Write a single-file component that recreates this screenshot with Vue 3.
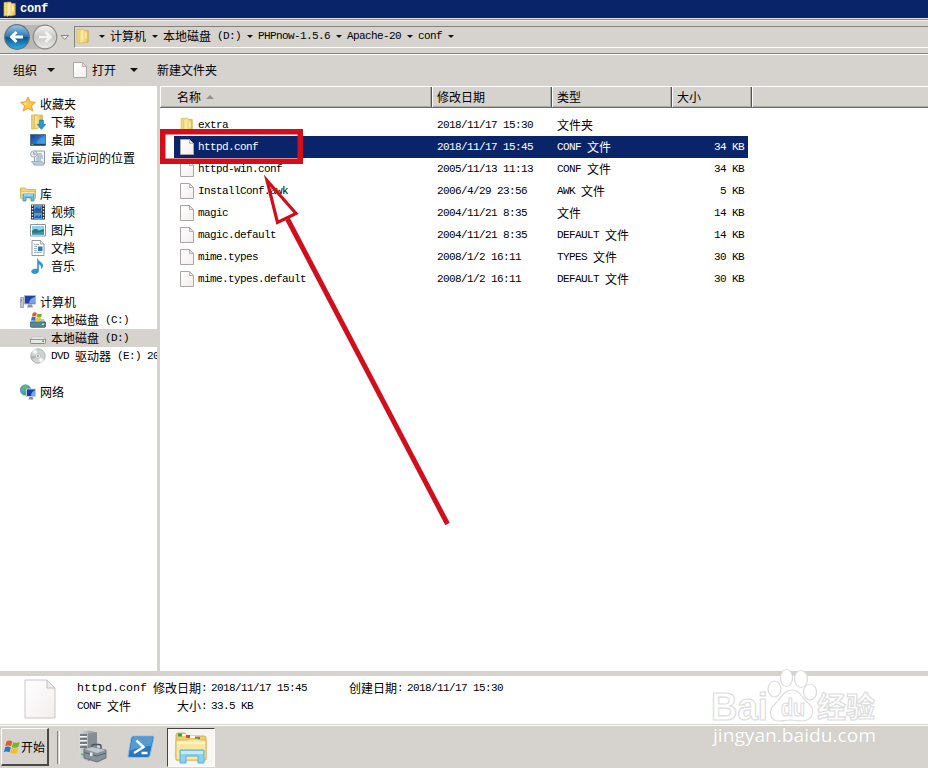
<script setup>
import { h } from 'vue'

// Sets Latin runs in a half-width face beside full-width Chinese glyphs.
const Txt = (props) =>
  h('span', { class: 'txt' }, props.t.split(/([\x00-\x7f]+)/).filter(Boolean).map((s) =>
    h('span', { class: /^[\x00-\x7f]/.test(s) ? 'latin' : 'han' }, s)))
Txt.props = ['t']

const crumbs = ['计算机', '本地磁盘 (D:)', 'PHPnow-1.5.6', 'Apache-20', 'conf']

const groups = [
  { name: '收藏夹', icon: 'star', items: [['下载', 'download'], ['桌面', 'desktop'], ['最近访问的位置', 'recent']] },
  { name: '库', icon: 'library', items: [['视频', 'video'], ['图片', 'picture'], ['文档', 'document'], ['音乐', 'music']] },
  { name: '计算机', icon: 'computer', items: [['本地磁盘 (C:)', 'sysdisk'], ['本地磁盘 (D:)', 'disk'], ['DVD 驱动器 (E:) 20', 'dvd']] },
  { name: '网络', icon: 'network', items: [] },
]

const files = [
  ['extra', '2018/11/17 15:30', '文件夹', ''],
  ['httpd.conf', '2018/11/17 15:45', 'CONF 文件', '34 KB'],
  ['httpd-win.conf', '2005/11/13 11:13', 'CONF 文件', '34 KB'],
  ['InstallConf.awk', '2006/4/29 23:56', 'AWK 文件', '5 KB'],
  ['magic', '2004/11/21 8:35', '文件', '14 KB'],
  ['magic.default', '2004/11/21 8:35', 'DEFAULT 文件', '14 KB'],
  ['mime.types', '2008/1/2 16:11', 'TYPES 文件', '30 KB'],
  ['mime.types.default', '2008/1/2 16:11', 'DEFAULT 文件', '30 KB'],
]
</script>

<template>
  <div class="window">
    <svg class="defs" width="0" height="0">
      <defs>
        <linearGradient id="gold" x1="0" x2="1"><stop offset="0" stop-color="#fff3b0" /><stop offset="1" stop-color="#e0b63c" /></linearGradient>
        <linearGradient id="sky" x1="0" y1="0" x2="1" y2="1"><stop offset="0" stop-color="#0b3f9c" /><stop offset="1" stop-color="#4ba3ec" /></linearGradient>
        <linearGradient id="paper" x1="0" y1="0" x2="1" y2="1"><stop offset="0" stop-color="#fff" /><stop offset="1" stop-color="#f3eeee" /></linearGradient>
        <linearGradient id="back" x1="0" y1="0" x2="0" y2="1"><stop offset="0" stop-color="#9cc7e4" /><stop offset=".48" stop-color="#2a78b4" /><stop offset=".5" stop-color="#0a4f8e" /><stop offset="1" stop-color="#2cb4e8" /></linearGradient>
        <linearGradient id="fwd" x1="0" y1="0" x2="0" y2="1"><stop offset="0" stop-color="#f4f4f2" /><stop offset=".5" stop-color="#c9c8c5" /><stop offset="1" stop-color="#ecebe8" /></linearGradient>
        <linearGradient id="metal" x1="0" x2="1"><stop offset="0" stop-color="#d4d8dc" /><stop offset="1" stop-color="#8a9299" /></linearGradient>
        <symbol id="folder" viewBox="0 0 16 16">
          <path d="M2 1.5 8 1v13l-6 1z" fill="#f0d67c" stroke="#d9b84e" stroke-width=".6" />
          <path d="M8 2.5h5.3V14L8 15z" fill="url(#gold)" stroke="#cfa63a" stroke-width=".6" />
          <path d="M5 2.5 9 1v12.5L5 15.5z" fill="#fbeaa4" stroke="#dfbf5c" stroke-width=".6" />
          <path d="M11 4.5v6" stroke="#fff8d4" stroke-width="1.2" />
        </symbol>
        <symbol id="page" viewBox="0 0 14 16">
          <path d="M.5.5h9l4 4v11H.5z" fill="url(#paper)" stroke="#aaa6a6" />
          <path d="M9.5.5v4h4z" fill="#e3e0e0" stroke="#aaa6a6" stroke-width=".8" />
        </symbol>
        <symbol id="flag" viewBox="0 0 16 16">
          <path d="M2.4 2.6C4.5 1.4 6 1.7 7.8 2.8L6.6 7.4C4.8 6.4 3.2 6.3 1.2 7.3z" fill="#e65a24" />
          <path d="M8.6 3.2c2 1 3.8 1.2 6.2.1l-1.3 4.8c-2.1 1-4.1.9-6.1-.2z" fill="#76b52b" />
          <path d="M1 8.2c2-1 3.6-.8 5.4.2L5.2 13C3.4 12 1.9 11.9 0 12.8z" fill="#2c78cc" />
          <path d="M7.2 8.8c2 1 3.9 1.2 6.1.2l-1.3 4.7c-2.1 1-4 .8-6-.2z" fill="#f6bd20" />
        </symbol>
        <symbol id="star" viewBox="0 0 16 16"><path d="m8 1 2.2 4.8 5.2.5-3.9 3.5 1.2 5.1L8 12.2l-4.7 2.7 1.2-5.1L.6 6.3l5.2-.5z" fill="#ffc843" stroke="#dc962a" stroke-width=".9" /><path d="m8 3-1.5 3.6-3.5.5 3 2.3z" fill="#ffe69c" /></symbol>
        <symbol id="download" viewBox="0 0 16 16"><path d="M1.5 1 7 .6v13.8l-5.5.9z" fill="#ecd070" stroke="#ceb058" stroke-width=".6" /><path d="M4.5 2 8 1h4.5v12L5 15z" fill="url(#gold)" stroke="#d0af4c" stroke-width=".6" /><path d="M9.5 6h4v4.3H16L11.5 15.5 7.2 10.3h2.3z" fill="#2994da" stroke="#1a6eb2" stroke-width=".5" /></symbol>
        <symbol id="desktop" viewBox="0 0 16 16"><path d="M.5 2.5h15v11H.5z" fill="url(#sky)" stroke="#587292" /><path d="M6 13c1-5 4-8 9-9v9z" fill="#5ab1ef" opacity=".45" /><path d="M1 11.8h14v1.4H1z" fill="#203f69" /><path d="M1.4 11.8h2v1.3h-2z" fill="#66b33b" /></symbol>
        <symbol id="recent" viewBox="0 0 16 16"><path d="M4.5 1h10v12.5h-10z" fill="#f6f9fc" stroke="#8b9aaa" /><path d="M7 4h5M7 6h6M6 8h7M6 10h5" stroke="#648caf" stroke-width=".9" /><path d="M1.5 11.5h10l3 1.7-1 2H4z" fill="#b9c9d8" stroke="#8293a3" stroke-width=".6" /><circle cx="3.8" cy="4" r="3.2" fill="#e8edf2" stroke="#8b98a4" stroke-width=".8" /><path d="M3.8 2v2.2h1.8" fill="none" stroke="#456e96" stroke-width=".7" /></symbol>
        <symbol id="library" viewBox="0 0 16 16"><path d="M.5 2h5l1.2 1.5h8.8V12H.5z" fill="#f0d475" stroke="#c5a548" stroke-width=".7" /><path d="M1 5.5h14V13H1z" fill="#fae9a6" stroke="#cfaf50" stroke-width=".5" /><path d="M3 8h11v7h-3v-3.5H6V15H3z" fill="#69bce9" stroke="#3388bd" stroke-width=".7" /><path d="M4 9h9" stroke="#cceeff" /></symbol>
        <symbol id="video" viewBox="0 0 16 16"><path d="M1 .5h14v15H1z" fill="#283038" /><path d="M4 1h8v6.5H4zM4 8.5h8V15H4z" fill="#4f9cd8" /><path d="m5 5 2-2 2 2 2-2v4H4zM5 13l2-2 2 2 2-3v4H4z" fill="#1b5f9e" /><path d="M2.5 1v14M13.5 1v14" stroke="#f0f4f6" stroke-width="1.4" stroke-dasharray="1.5 1.5" /></symbol>
        <symbol id="picture" viewBox="0 0 16 16"><path d="M.5 2.5h15V14H.5z" fill="#fff" stroke="#909497" /><path d="M2 4h12v8.5H2z" fill="#8bd0ef" /><path d="M2 9c3-3 5-2 7-.5L14 7v5.5H2z" fill="#2c7b79" /><path d="M2 10.5c4 1 7-.2 12-1v3H2z" fill="#2b9db8" /></symbol>
        <symbol id="document" viewBox="0 0 16 16"><path d="M2 .5h8.500L14 4v11.500H2z" fill="#fff" stroke="#8c98a3" /><path d="M10.5.5V4H14" fill="#dfe6eb" stroke="#8c98a3" stroke-width=".8" /><path d="M4 4.5h5M4 6.5h3M4 8.5h3M4 10.5h3M4 12.5h8" stroke="#859cb4" stroke-width=".8" /><path d="M8 6.5h4.500V11H8z" fill="#2f78b8" /></symbol>
        <symbol id="music" viewBox="0 0 16 16"><path d="M7.5.5c1 3.5 5.7 3.8 5.3 7.5-.1 1.2-.7 2-1.500 2.700.7-3-1-4-2.700-4.700V13c-.3 2.100-2.700 3-5 2.500-2.200-.6-2.800-2.500-1-3.700 1.400-1 3.300-1.100 4.900-.6z" fill="#2997dd" stroke="#186da9" stroke-width=".4" /></symbol>
        <symbol id="computer" viewBox="0 0 16 16"><path d="M.6 3.5h3v10h-3z" fill="#c4cbd4" stroke="#7b8794" stroke-width=".7" /><path d="M4.5 1.5h11V10h-11z" fill="#233fa8" stroke="#aeb7c9" /><path d="M9 9.5c.5-4 2.500-6 6-6.500v6.500z" fill="#79a0ed" /><path d="M8 10.5h4l1 3H7z" fill="#8a96a8" /><path d="M1.5 5.5v2" stroke="#55af45" /></symbol>
        <symbol id="disk" viewBox="0 0 16 16"><path d="M2.5 7h11l2 2.500H.5z" fill="#f5f6f5" stroke="#a5a8a8" stroke-width=".5" /><path d="M.5 9.3h15v3.400q0 .8-1 .8h-13q-1 0-1-.8z" fill="#e6e8e8" stroke="#707576" stroke-width=".8" /><path d="M12 10.5h2V12h-2z" fill="#49ad3c" /></symbol>
        <symbol id="sysdisk" viewBox="0 0 16 16"><path d="M2.5 7h11l2 3H.5z" fill="#a7c7cf" /><path d="M.5 10h15v4.500q0 .8-1 .8h-13q-1 0-1-.8z" fill="#558796" stroke="#35616e" stroke-width=".8" /><path d="M12 11.5h2V13h-2z" fill="#bbed80" /><use href="#flag" x="1" y="-1" width="12" height="12" /></symbol>
        <symbol id="dvd" viewBox="0 0 16 16"><circle cx="8" cy="8" r="7.2" fill="#d1d4d3" stroke="#969b9b" stroke-width=".7" /><path d="M8 8 2 4a7 7 0 0 1 4-3zM8 8l6 4a7 7 0 0 1-4 3z" fill="#fff" opacity=".8" /><path d="M8 8 1.5 12a7 7 0 0 1-.5-4z" fill="#a4aba8" opacity=".7" /><circle cx="8" cy="8" r="2.5" fill="#f2f3f3" stroke="#a2a7a6" stroke-width=".6" /><circle cx="8" cy="8" r=".9" fill="#888" /></symbol>
        <symbol id="network" viewBox="0 0 16 16"><circle cx="5.5" cy="6" r="5.2" fill="#49a4df" stroke="#2275b1" stroke-width=".6" /><path d="M2 3c2-2 4-2.500 6-1.500L6 5 3 6z" fill="#6abb50" /><path d="M2 8l3 0 1 2-1 1z" fill="#54ad43" /><path d="M6.5 5h9v7.5h-9z" fill="#1740ad" stroke="#c9d3dd" stroke-width=".9" /><path d="M11 12c.2-3.500 1.700-5 4-5.500V12z" fill="#73a5ef" /><path d="M9.5 13h3l1 2.500h-5z" fill="#7e8b9a" /></symbol>
      </defs>
    </svg>

    <header class="titlebar">
      <svg width="16" height="16"><use href="#folder" /></svg>
      <b>conf</b>
    </header>

    <nav class="navbar">
      <svg class="arrows" width="72" height="30" viewBox="0 0 72 30">
        <path d="M17 3h28q-8 12 0 24H17z" fill="#b9b8b4" />
        <circle cx="17" cy="15" r="12.3" fill="url(#back)" stroke="#66727b" stroke-width="1.2" />
        <path d="M23 15H12M16.5 10 11.5 15l5 5" fill="none" stroke="#fff" stroke-width="2.8" />
        <circle cx="45" cy="15" r="11.8" fill="url(#fwd)" stroke="#8a8986" stroke-width="1.2" />
        <path d="M39 15h11M45.5 10l5 5-5 5" fill="none" stroke="#f4f4f2" stroke-width="2.6" />
        <path d="M61 13.5h7.5L64.8 17.5z" fill="#eee" stroke="#898885" />
      </svg>
      <div class="address">
        <svg width="16" height="16"><use href="#folder" /></svg>
        <i class="caret first"></i>
        <template v-for="c in crumbs" :key="c">
          <Txt :t="c" /><i class="caret"></i>
        </template>
      </div>
    </nav>

    <div class="toolbar">
      <Txt t="组织" /><i class="caret big"></i>
      <svg class="page" width="14" height="16"><use href="#page" /></svg>
      <Txt t="打开" /><i class="caret big open"></i>
      <Txt t="新建文件夹" />
    </div>

    <main class="body">
      <aside class="tree">
        <section v-for="g in groups" :key="g.name">
          <div class="node root"><svg width="16" height="16"><use :href="'#' + g.icon" /></svg><Txt :t="g.name" /></div>
          <div v-for="[n, icon] in g.items" :key="n" class="node" :class="{ current: icon === 'disk' }">
            <svg width="16" height="16"><use :href="'#' + icon" /></svg><Txt :t="n" />
          </div>
        </section>
      </aside>
      <section class="list">
        <div class="head">
          <div class="th name"><Txt t="名称" /><i class="sort"></i></div>
          <div class="th"><Txt t="修改日期" /></div>
          <div class="th"><Txt t="类型" /></div>
          <div class="th size"><Txt t="大小" /></div>
          <div class="th rest"></div>
        </div>
        <div class="rows">
          <div v-for="(f, i) in files" :key="f[0]" class="row" :class="{ selected: i === 1 }">
            <div class="file">
              <svg v-if="i === 0" width="16" height="16"><use href="#folder" /></svg>
              <svg v-else width="14" height="16"><use href="#page" /></svg>
              <Txt :t="f[0]" />
            </div>
            <Txt :t="f[1]" /><Txt :t="f[2]" /><Txt class="kb" :t="f[3]" />
          </div>
        </div>
      </section>
    </main>

    <footer class="details">
      <svg width="32" height="40" viewBox="0 0 32 40"><path d="M1 1h22l8 8v30H1z" fill="url(#paper)" stroke="#cbc6c6" /><path d="M23 1v8h8z" fill="#eeecec" stroke="#c5c0c0" /></svg>
      <div class="info">
        <span class="filename">httpd.conf</span><Txt t="修改日期:" /><Txt t="2018/11/17 15:45" /><Txt t="创建日期:" /><Txt t="2018/11/17 15:30" />
        <Txt t="CONF 文件" /><Txt class="right" t="大小:" /><Txt t="33.5 KB" />
      </div>
    </footer>

    <div class="taskbar">
      <button class="start"><svg width="17" height="18" viewBox="0 0 16 16"><use href="#flag" /></svg><Txt t="开始" /></button>
      <div class="grip"></div>
      <svg class="server" width="30" height="34" viewBox="0 0 30 34">
        <path d="M1 2 11 .5l8 2V27l-8 4L1 28z" fill="url(#metal)" />
        <path d="M10 3.5 19 2.500V27l-9 4z" fill="#868e95" />
        <path d="M2 5h7M2 9h7M2 13h7M2 17h7" stroke="#596168" stroke-width="1.3" /><path d="M2 6.5h7M2 10.5h7M2 14.5h7" stroke="#f5f6f7" />
        <path d="M3 24l3 1" stroke="#60b953" stroke-width="1.5" />
        <path d="M14 18v-2q0-1.500 2-1.500h5q2 0 2 1.500v3" fill="none" stroke="#4d565d" stroke-width="1.5" />
        <path d="m6 19 8-2 14 3v8l-9 4-13-4z" fill="#87919a" stroke="#5c656b" stroke-width=".8" /><path d="m6 19 8-2 14 3-9 3z" fill="#c1c8cd" /><path d="M6.5 22.5 19 26l9-3" fill="none" stroke="#59636b" /><path d="M12 22.500h2.500v3.500H12z" fill="#e8ebed" />
      </svg>
      <svg class="shell" width="28" height="24" viewBox="0 0 28 24"><path d="M6.5 1h19q2 0 1.500 2l-4 17.500q-.6 2-2.600 2H2.500q-2 0-1.500-2L4 3q.6-2 2.500-2z" fill="#2878bd" stroke="#9bc5e5" /><path d="M5 4q.3-2 2-2h18q1 0 .8 1.500L24 11Q14 11 3 16z" fill="#73b1de" opacity=".6" /><path d="m9.5 5.5 7 6.500-9.500 6M14.500 18h6" fill="none" stroke="#fff" stroke-width="2.4" /></svg>
      <div class="task">
        <svg width="36" height="34" viewBox="0 0 36 34">
          <path d="M3 4q0-2 2-2h7l2 3h17q2 0 2 2v22H3z" fill="#f0cd70" stroke="#d3aa4c" />
          <path d="M5 2.5h4v3H5z" fill="#30a33c" /><path d="M13 4h4v3h-4z" fill="#d84a29" /><path d="M22 6h5v3h-5z" fill="#338fc2" /><path d="M9 3h4v2H9zM17 5h5v2h-5z" fill="#fff" />
          <path d="M3 9h11l3-1h8l2 1h6v18q0 2-2 2H5q-2 0-2-2z" fill="#fbe7a0" stroke="#ddb857" />
          <path d="M4 12h28" stroke="#fff4c4" stroke-width="2" />
          <path d="M7 19h24v13h-6v-7H13v7H7z" fill="#8dd0ef" stroke="#5aafd8" /><path d="M8 20h22v3H8z" fill="#c4ebfa" />
        </svg>
      </div>
    </div>

    <svg class="overlay" width="928" height="768" viewBox="0 0 928 768">
      <rect x="162.75" y="131.75" width="137.5" height="29.5" fill="none" stroke="#d10e1b" stroke-width="5.5" />
      <path d="M267 180.500 296 213.5 277.5 222.5z" fill="none" stroke="#d10e1b" stroke-width="3.2" stroke-miterlimit="10" />
      <path d="M287.5 219 447.5 524" stroke="#d10e1b" stroke-width="5" />
      <g class="mark" fill="#fff" stroke="#dcdcdc" stroke-width="1.2">
        <ellipse cx="786.5" cy="678" rx="6" ry="8.5" /><ellipse cx="801" cy="679" rx="6.5" ry="8.5" />
        <ellipse cx="774.5" cy="689" rx="6.5" ry="8" /><ellipse cx="810" cy="692" rx="6.5" ry="8" />
        <path d="M792 690c9 0 10 9 16 13 9 7 4 18-6 18-5 0-7-1-12-1s-7 1-11 1c-10 0-11-11-4-17 6-5 8-14 17-14z" />
        <text x="711" y="719.5" font-size="38" font-weight="700" textLength="57" lengthAdjust="spacingAndGlyphs">Bai</text>
        <text x="781" y="716" font-size="23" font-weight="700" textLength="24" lengthAdjust="spacingAndGlyphs">du</text>
        <text class="cn" x="817" y="717.5" font-size="29" font-weight="700" textLength="58" lengthAdjust="spacingAndGlyphs">经验</text>
      </g>
      <text class="site" x="713" y="742" font-size="19" textLength="163" lengthAdjust="spacingAndGlyphs">jingyan.baidu.com</text>
    </svg>
  </div>
</template>

<style>
body { margin: 0; overflow: hidden; }
.txt { white-space: pre; display: inline-flex; align-items: center; line-height: 16px; }
.txt .latin { font: 11px/16px "Liberation Mono", monospace; letter-spacing: -0.6px; }
.txt .han { font: 12px/16px "Noto Sans CJK SC", sans-serif; }
</style>

<style scoped>
.window { position: relative; width: 928px; height: 768px; overflow: hidden; display: flex; flex-direction: column; background: #d6d3ce; color: #000; font: 12px/16px "Noto Sans CJK SC", sans-serif; }
.window svg { flex: none; display: block; }
.window > .defs, .window > .overlay { position: absolute; left: 0; top: 0; }
.overlay { pointer-events: none; }
.titlebar { height: 18px; flex: none; background: #0a246a; display: flex; align-items: center; padding-left: 2px; gap: 2px; }
.titlebar b { color: #fff; font: 700 12px/16px "Liberation Mono", monospace; letter-spacing: -0.2px; }
.navbar { box-sizing: border-box; height: 37px; flex: none; display: flex; border-top: 1px solid #e2dfda; border-bottom: 1px solid #fff; box-shadow: inset 0 1px #8e8c88, inset 0 2px #f1efec, inset 0 -1px #858380; }
.arrows { margin: 3px 2px 0 0; }
.address { box-sizing: border-box; flex: 1; height: 22px; margin-top: 7px; border: solid; border-width: 1px 0 1px 1px; border-color: #858380 #fff #fff #858380; display: flex; align-items: center; padding-bottom: 3px; }
.caret { flex: none; width: 0; height: 0; border: 3px solid transparent; border-top: 3px solid #111; border-bottom: 0; margin: 2px 5px 0 6px; }
.caret.first { margin-left: 8px; margin-right: 5px; }
.toolbar { box-sizing: border-box; height: 31px; flex: none; display: flex; align-items: center; padding: 0 0 1px 13px; }
.caret.big { border-width: 4px 4px 0; margin: 0 18px 0 10px; }
.caret.open { margin: 0 19px 0 14px; }
.toolbar .page { margin-right: 5px; }
.body { height: 585px; flex: none; display: flex; gap: 3px; }
.tree { box-sizing: border-box; width: 157px; padding-top: 9px; background: #fff; overflow: hidden; display: flex; flex-direction: column; gap: 18px; }
.node { height: 18px; display: flex; align-items: center; gap: 5px; padding-left: 30px; white-space: nowrap; }
.node.root { padding-left: 20px; gap: 4px; }
.node.current { background: #d6d3ce; }
.list { flex: 1; background: #fff; }
.head { display: flex; box-sizing: border-box; height: 22px; background: #d6d3ce; border-top: 1px solid #fff; border-bottom: 1px solid #6e6c69; }
.th { box-sizing: border-box; width: 120px; display: flex; align-items: center; padding-left: 4px; border-left: 1px solid #fff; border-right: 1px solid #55534f; box-shadow: inset -1px -1px #aaa8a3; }
.th.name { width: 272px; padding-left: 16px; }
.th.size { width: 80px; }
.th.rest { flex: 1; border-right: 0; box-shadow: inset 0 -1px #aaa8a3; }
.sort { border: 4px solid transparent; border-top: 0; border-bottom-color: #94928e; margin-left: 5px; }
.rows { padding: 6px 0 0 14px; }
.row { width: 574px; height: 22px; display: grid; grid-template-columns: 263px 120px 116px 71px; align-items: center; }
.row.selected { background: #0a246a; color: #fff; }
.file { display: flex; align-items: center; padding-left: 6px; gap: 4px; }
.file svg[width="16"] { margin: 0 -1px; }
.kb { justify-content: flex-end; }
.details { box-sizing: border-box; height: 48px; flex: none; margin-top: 5px; background: #fff; display: flex; padding: 3px 0 0 24px; gap: 21px; }
.info { display: grid; grid-template-columns: 76px 58px 138px 58px 120px; grid-auto-rows: 18px; align-items: center; height: 36px; }
.filename { font: 11.67px/16px "Liberation Mono", monospace; }
.right { justify-content: flex-end; padding-right: 4px; }
.taskbar { box-sizing: border-box; flex: 1; border-top: 1px solid #d6d3ce; box-shadow: inset 0 1px #fff; display: flex; align-items: flex-start; }
.start { box-sizing: border-box; width: 48px; height: 38px; margin: 3px 0 0 1px; padding: 0 0 0 2px; display: flex; align-items: center; background: #d6d3ce; border: solid; border-width: 1px 2px 2px 1px; border-color: #fff #4a4845 #4a4845 #fff; color: #000; gap: 0; }
.grip { width: 1px; height: 33px; border-left: 1px solid #858380; border-right: 1px solid #fff; margin: 6px 18px 0 8px; }
.server { margin-top: 5px; }
.shell { margin: 10px 12px 0 19px; }
.task { box-sizing: border-box; width: 48px; height: 39px; margin-top: 3px; border: 1px solid; border-color: #45433f #fff #fff #45433f; background: #f7f6f4; display: flex; align-items: center; justify-content: center; }
.mark { font-family: "Liberation Sans", sans-serif; }
.mark .cn { font-family: "Noto Sans CJK SC", sans-serif; }
.site { font-family: "Open Sans", sans-serif; fill: #fff; stroke: #c8c5c0; stroke-width: .6px; paint-order: stroke; }
</style>
